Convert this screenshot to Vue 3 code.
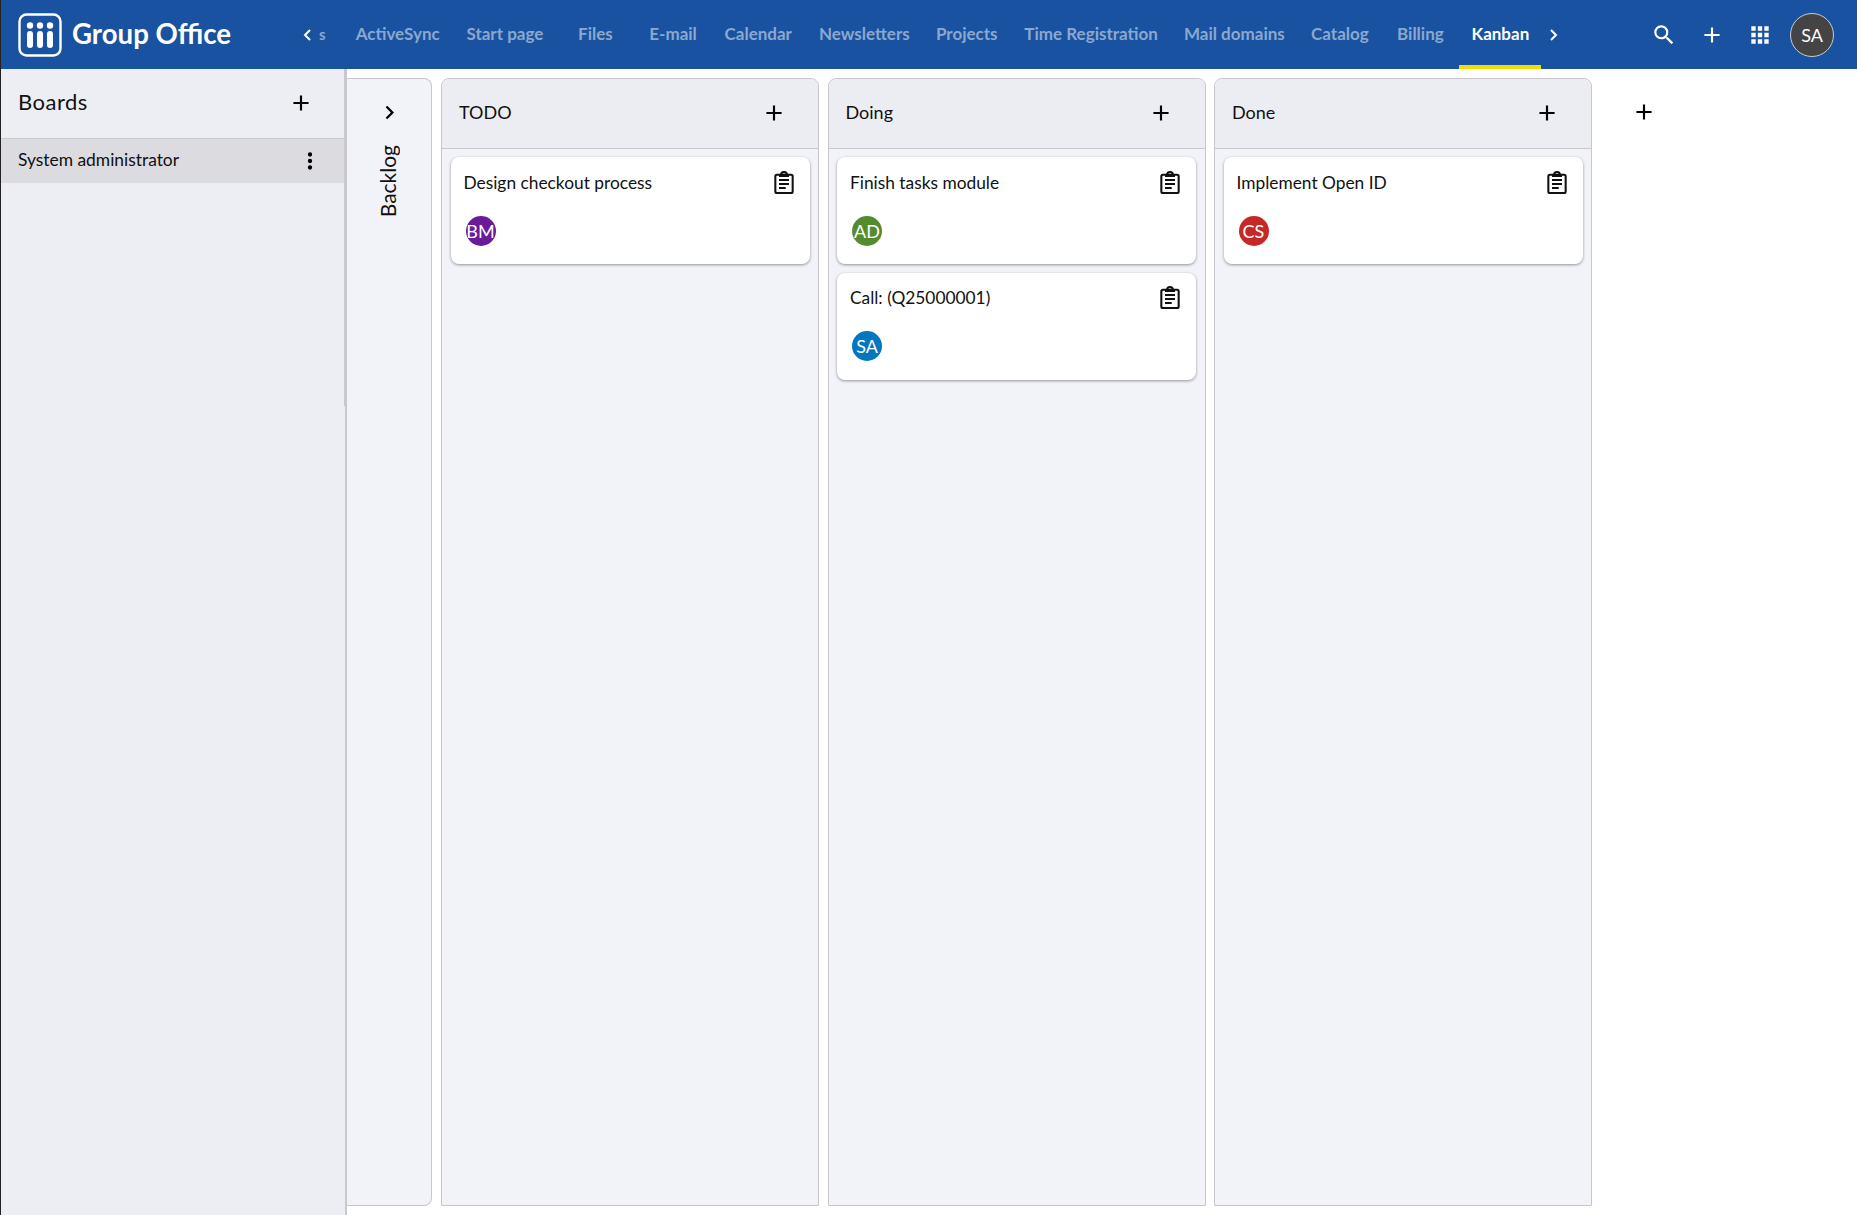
<template>
  <div class="page">
    <header class="topbar">
      <div class="brand">
        <svg class="logo" width="44" height="44" viewBox="0 0 44 44">
          <rect x="1.5" y="1.5" width="41" height="41" rx="7" fill="none" stroke="#fff" stroke-width="2.4" />
          <g fill="#fff">
            <circle cx="12" cy="12.5" r="3.2" /><circle cx="22" cy="12.5" r="3.2" /><circle cx="32" cy="12.5" r="3.2" />
            <rect x="9" y="18" width="6" height="17" rx="3" /><rect x="19" y="18" width="6" height="17" rx="3" /><rect x="29" y="18" width="6" height="17" rx="3" />
          </g>
        </svg>
        <span class="brand-name">Group Office</span>
      </div>
      <nav class="tabs">
        <svg class="chev left" width="10" height="14" viewBox="0 0 10 14"><path d="M8 2 3 7l5 5" fill="none" stroke="#fff" stroke-width="2" /></svg>
        <span class="tab cut">s</span>
        <span v-for="t in tabs" :key="t.name" class="tab" :class="{ active: t.active }" :style="{ width: t.w + 'px' }">{{ t.name }}</span>
        <svg class="chev right" width="10" height="14" viewBox="0 0 10 14"><path d="M2 2l5 5-5 5" fill="none" stroke="#fff" stroke-width="2" /></svg>
      </nav>
      <div class="actions">
        <svg width="26" height="26" viewBox="0 0 24 24"><path fill="#fff" d="M15.5 14h-.79l-.28-.27A6.47 6.47 0 0 0 16 9.5 6.5 6.5 0 1 0 9.5 16c1.61 0 3.09-.59 4.23-1.57l.27.28v.79l5 4.99L20.49 19l-4.99-5zm-6 0C7.01 14 5 11.99 5 9.5S7.01 5 9.5 5 14 7.01 14 9.5 11.99 14 9.5 14z" /></svg>
        <svg width="26" height="26" viewBox="0 0 24 24"><path fill="#fff" d="M19 13h-6v6h-2v-6H5v-2h6V5h2v6h6v2z" /></svg>
        <svg width="26" height="26" viewBox="0 0 24 24"><path fill="#fff" d="M4 8h4V4H4v4zm6 12h4v-4h-4v4zm-6 0h4v-4H4v4zm0-6h4v-4H4v4zm6 0h4v-4h-4v4zm6-10v4h4V4h-4zm-6 4h4V4h-4v4zm6 6h4v-4h-4v4zm0 6h4v-4h-4v4z" /></svg>
        <div class="me">SA</div>
      </div>
    </header>

    <div class="body">
      <aside class="sidebar">
        <div class="side-head">
          <h2>Boards</h2>
          <svg width="26" height="26" viewBox="0 0 24 24"><path d="M19 13h-6v6h-2v-6H5v-2h6V5h2v6h6v2z" /></svg>
        </div>
        <div class="side-row">
          <span>System administrator</span>
          <svg width="26" height="26" viewBox="0 0 24 24"><path d="M12 8a2 2 0 1 0 0-4 2 2 0 0 0 0 4zm0 2a2 2 0 1 0 0 4 2 2 0 0 0 0-4zm0 6a2 2 0 1 0 0 4 2 2 0 0 0 0-4z" /></svg>
        </div>
      </aside>
      <div class="divider"></div>

      <main class="board">
        <section class="backlog">
          <svg width="27" height="27" viewBox="0 0 24 24"><path d="M10 6 8.59 7.41 13.17 12l-4.58 4.59L10 18l6-6z" /></svg>
          <span class="back-label">Backlog</span>
        </section>

        <section v-for="col in columns" :key="col.title" class="column">
          <div class="col-head">
            <span>{{ col.title }}</span>
            <svg width="26" height="26" viewBox="0 0 24 24"><path d="M19 13h-6v6h-2v-6H5v-2h6V5h2v6h6v2z" /></svg>
          </div>
          <div class="cards">
            <article v-for="card in col.cards" :key="card.title" class="card">
              <div class="card-top">
                <span>{{ card.title }}</span>
                <svg class="clip" width="26" height="26" viewBox="0 0 24 24" fill="none" stroke="#111" stroke-width="1.9">
                  <rect x="4" y="4.4" width="16" height="16.8" rx="1.4" />
                  <path d="M9.3 4.6a2.7 2.7 0 0 1 5.4 0" />
                  <path d="M7.4 5.6h9.2M7.4 9.2h9.2M7.4 12.9h9.2M7.4 16.6h6.2" />
                </svg>
              </div>
              <div class="avatar" :style="{ background: card.color }">{{ card.initials }}</div>
            </article>
          </div>
        </section>

        <svg class="add-col" width="26" height="26" viewBox="0 0 24 24"><path d="M19 13h-6v6h-2v-6H5v-2h6V5h2v6h6v2z" /></svg>
      </main>
    </div>
  </div>
</template>

<script setup>
const tabs = [
  { name: 'ActiveSync', w: 115.4 },
  { name: 'Start page', w: 99 },
  { name: 'Files', w: 82 },
  { name: 'E-mail', w: 73.4 },
  { name: 'Calendar', w: 97 },
  { name: 'Newsletters', w: 115 },
  { name: 'Projects', w: 90 },
  { name: 'Time Registration', w: 158.6 },
  { name: 'Mail domains', w: 128 },
  { name: 'Catalog', w: 83 },
  { name: 'Billing', w: 78 },
  { name: 'Kanban', w: 82, active: true }
]

const columns = [
  {
    title: 'TODO',
    cards: [{ title: 'Design checkout process', initials: 'BM', color: '#6a1b9a' }]
  },
  {
    title: 'Doing',
    cards: [
      { title: 'Finish tasks module', initials: 'AD', color: '#558b2f' },
      { title: 'Call: (Q25000001)', initials: 'SA', color: '#0277bd' }
    ]
  },
  {
    title: 'Done',
    cards: [{ title: 'Implement Open ID', initials: 'CS', color: '#c62828' }]
  }
]
</script>

<style>
html, body {
  margin: 0;
  background: #fff;
}
</style>

<style scoped>
.page {
  height: 1215px;
  display: flex;
  flex-direction: column;
  overflow: hidden;
  font-family: Lato, "Open Sans", sans-serif;
  font-size: 16px;
  color: #111;
}

.topbar {
  height: 69px;
  flex: none;
  display: flex;
  align-items: center;
  background: #1852a0;
  border-left: 1px solid #222;
  box-sizing: border-box;
}

.brand {
  width: 293px;
  flex: none;
  display: flex;
  align-items: center;
  padding-left: 17px;
  gap: 10px;
  box-sizing: border-box;
  color: #fff;
}

.brand-name {
  padding-bottom: 3px;
  font-size: 27.6px;
  font-weight: 700;
  white-space: nowrap;
}

.tabs {
  display: flex;
  align-items: center;
  height: 69px;
  flex: none;
  padding-left: 8px;
}

.tab {
  height: 69px;
  flex: none;
  box-sizing: border-box;
  line-height: 68px;
  text-align: center;
  font-size: 17px;
  font-weight: 700;
  color: #8ba8cf;
  white-space: nowrap;
}

.tab.cut {
  width: 12px;
  margin: 0 9px 0 7px;
  font-size: 15px;
  text-align: left;
}

.tab.active {
  color: #fff;
  border-bottom: 4px solid #f5dd00;
}

.chev.right {
  margin-left: 8px;
}

.actions {
  margin-left: auto;
  display: flex;
  align-items: center;
  gap: 22px;
  padding-right: 23px;
}

.me {
  width: 44px;
  height: 44px;
  margin-left: -5px;
  box-sizing: border-box;
  border: 1px solid #ccc;
  border-radius: 50%;
  background: #444;
  color: #fff;
  font-size: 18px;
  line-height: 42px;
  text-align: center;
}

.body {
  flex: 1;
  display: flex;
  min-height: 0;
}

.sidebar {
  width: 345px;
  flex: none;
  background: #edeef3;
  border-left: 1px solid #222;
  box-sizing: border-box;
}

.side-head {
  height: 70px;
  display: flex;
  align-items: center;
  justify-content: space-between;
  padding: 0 31px 2px 17px;
  border-bottom: 1px solid #c9c9cd;
  box-sizing: border-box;
}

.side-head h2 {
  margin: 0 0 2px;
  font-size: 22px;
  font-weight: 400;
  letter-spacing: 0.5px;
}

.side-row {
  height: 44px;
  display: flex;
  align-items: center;
  justify-content: space-between;
  padding: 0 22px 0 17px;
  background: #dbdbe0;
  font-size: 17.4px;
}

.side-row span {
  padding-bottom: 4px;
}

.divider {
  position: relative;
  width: 2px;
  flex: none;
  background: #c9c9cd;
}

/* sash is one pixel wider along the top part of the panel */
.divider::before {
  content: "";
  position: absolute;
  top: 0;
  left: -1px;
  width: 1px;
  height: 337px;
  background: #c9c9cd;
}

.board {
  flex: 1;
  display: flex;
  align-items: flex-start;
  gap: 8.5px;
  padding-top: 9px;
  min-width: 0;
}

.backlog,
.column {
  height: 1128px;
  box-sizing: border-box;
  flex: none;
  background: #f2f3f9;
  border: 1px solid #c8c8cc;
}

.backlog {
  width: 85px;
  margin-right: 0.5px;
  border-left: none;
  border-radius: 0 8px 8px 0;
  display: flex;
  flex-direction: column;
  align-items: center;
  padding-top: 20px;
}

.back-label {
  margin: 19px 4px 0 0;
  writing-mode: vertical-rl;
  transform: rotate(180deg);
  font-size: 21px;
}

.column {
  width: 378px;
  border-radius: 8px 8px 0 0;
}

.col-head {
  height: 70px;
  display: flex;
  align-items: center;
  justify-content: space-between;
  padding: 0 31px 2px 17px;
  background: #ecedf2;
  border-bottom: 1px solid #c8c8cc;
  border-radius: 8px 8px 0 0;
  font-size: 18px;
  box-sizing: border-box;
}

.col-head span {
  padding-bottom: 1px;
}

.cards {
  display: flex;
  flex-direction: column;
  gap: 9px;
  padding: 8px 8.5px 0;
}

.card {
  height: 107px;
  box-sizing: border-box;
  padding: 12px 12.6px 0 13px;
  background: #fff;
  border-radius: 8px;
  box-shadow: 0 1px 3px rgba(0, 0, 0, 0.4);
}

.card + .card {
  padding-top: 11px;
}

.card-top {
  display: flex;
  align-items: center;
  justify-content: space-between;
  height: 26px;
  font-size: 17.33px;
}

.clip {
  margin-top: 2px;
}

.avatar {
  width: 30px;
  height: 30px;
  margin: 21px 0 0 2px;
  border-radius: 50%;
  color: #fff;
  font-size: 18px;
  line-height: 30px;
  text-align: center;
  overflow: hidden;
}

.add-col {
  margin: 21px 0 0 30px;
}
</style>
